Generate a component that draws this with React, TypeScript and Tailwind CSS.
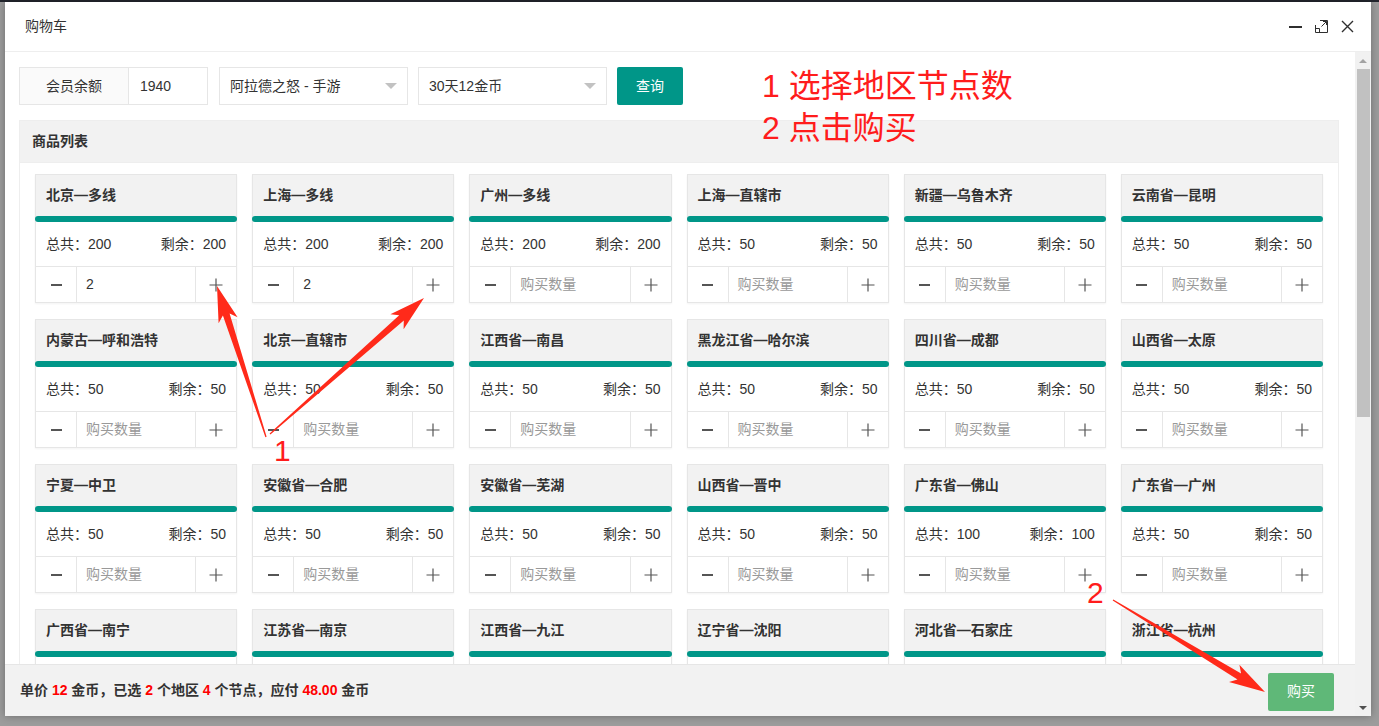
import React from "react";

type Node = { name: string; total: number; left: number; qty?: number };

const rows: Node[][] = [
  [
    { name: "北京—多线", total: 200, left: 200, qty: 2 },
    { name: "上海—多线", total: 200, left: 200, qty: 2 },
    { name: "广州—多线", total: 200, left: 200 },
    { name: "上海—直辖市", total: 50, left: 50 },
    { name: "新疆—乌鲁木齐", total: 50, left: 50 },
    { name: "云南省—昆明", total: 50, left: 50 },
  ],
  [
    { name: "内蒙古—呼和浩特", total: 50, left: 50 },
    { name: "北京—直辖市", total: 50, left: 50 },
    { name: "江西省—南昌", total: 50, left: 50 },
    { name: "黑龙江省—哈尔滨", total: 50, left: 50 },
    { name: "四川省—成都", total: 50, left: 50 },
    { name: "山西省—太原", total: 50, left: 50 },
  ],
  [
    { name: "宁夏—中卫", total: 50, left: 50 },
    { name: "安徽省—合肥", total: 50, left: 50 },
    { name: "安徽省—芜湖", total: 50, left: 50 },
    { name: "山西省—晋中", total: 50, left: 50 },
    { name: "广东省—佛山", total: 100, left: 100 },
    { name: "广东省—广州", total: 50, left: 50 },
  ],
  [
    { name: "广西省—南宁", total: 50, left: 50 },
    { name: "江苏省—南京", total: 50, left: 50 },
    { name: "江西省—九江", total: 50, left: 50 },
    { name: "辽宁省—沈阳", total: 50, left: 50 },
    { name: "河北省—石家庄", total: 50, left: 50 },
    { name: "浙江省—杭州", total: 50, left: 50 },
  ],
];

const nodes = rows.flat();

// tapered red arrow, thin at the tail and widening toward the head
const arrowPoints = (x1: number, y1: number, x2: number, y2: number) => {
  const dx = x2 - x1;
  const dy = y2 - y1;
  const len = Math.hypot(dx, dy);
  const ux = dx / len;
  const uy = dy / len;
  const nx = -uy;
  const ny = ux;
  const head = 30;
  const bx = x2 - ux * head;
  const by = y2 - uy * head;
  const wx = x2 - ux * (head + 6);
  const wy = y2 - uy * (head + 6);
  const p = (x: number, y: number) => `${x.toFixed(1)},${y.toFixed(1)}`;
  return [
    p(x1 + nx * 0.6, y1 + ny * 0.6),
    p(bx + nx * 3.5, by + ny * 3.5),
    p(wx + nx * 10, wy + ny * 10),
    p(x2, y2),
    p(wx - nx * 10, wy - ny * 10),
    p(bx - nx * 3.5, by - ny * 3.5),
    p(x1 - nx * 0.6, y1 - ny * 0.6),
  ].join(" ");
};

const Caret = () => (
  <span className="w-0 h-0 border-x-[6px] border-x-transparent border-t-[6px] border-t-[#c2c2c2]" />
);

const NodeCard = ({ node }: { node: Node }) => (
  <div className="border border-[#e6e6e6] bg-white shadow-[0_1px_2px_rgba(0,0,0,0.05)]">
    <div className="h-[41px] bg-[#f2f2f2] px-[10px] flex items-center text-[14px] font-bold text-[#333]">
      {node.name}
    </div>
    <div className="h-[6px] mx-[-1px] rounded-full bg-[#009688]" />
    <div className="h-[44px] px-[10px] flex items-center justify-between text-[14px] text-[#333]">
      <span>总共：{node.total}</span>
      <span>剩余：{node.left}</span>
    </div>
    <div className="h-[36px] border-t border-[#e6e6e6] flex">
      <div className="w-[41px] border-r border-[#e6e6e6] flex items-center justify-center">
        <span className="w-[11px] h-[2px] bg-[#555]" />
      </div>
      <div className="flex-1 px-[9px] flex items-center text-[14px]">
        {node.qty ? (
          <span className="text-[#333]">{node.qty}</span>
        ) : (
          <span className="text-[#999]">购买数量</span>
        )}
      </div>
      <div className="w-[41px] border-l border-[#e6e6e6] flex items-center justify-center text-[#555]">
        <svg width="14" height="14" viewBox="0 0 14 14">
          <path d="M7 0.5V13.5M0.5 7H13.5" stroke="#555" strokeWidth="1.2" />
        </svg>
      </div>
    </div>
  </div>
);

export default function App() {
  return (
    <div
      className="relative w-[1379px] h-[726px] overflow-hidden bg-[#9c9c9c]"
      style={{ fontFamily: '"Liberation Sans", "Noto Sans CJK SC", sans-serif' }}
    >
      <div className="h-[2px] bg-[#23262e]" />
      <div className="pl-[5px]">
        <div className="w-[1366px] h-[714px] bg-white flex flex-col shadow-[0_0_8px_rgba(0,0,0,0.3)]">
          {/* title bar */}
          <div className="h-[50px] shrink-0 border-b border-[#eee] flex items-center justify-between pl-[20px] pr-[16px]">
            <span className="text-[14px] text-[#333]">购物车</span>
            <div className="flex items-center gap-[11px]">
              <svg width="15" height="15" viewBox="0 0 15 15">
                <path d="M1 8H14" stroke="#2f2f2f" strokeWidth="2" />
              </svg>
              <svg width="15" height="15" viewBox="0 0 15 15">
                <path d="M1.5 6V13.5H13.5V1.5H6" fill="none" stroke="#2f2f2f" strokeWidth="1" />
                <path d="M1.5 9.5H5.5V13.5" fill="none" stroke="#2f2f2f" strokeWidth="1" />
                <path d="M7.5 7.5L12.5 2.5M9 2.5H12.5V6" fill="none" stroke="#2f2f2f" strokeWidth="1" />
              </svg>
              <svg width="15" height="15" viewBox="0 0 15 15">
                <path d="M2 2L13 13M13 2L2 13" stroke="#2f2f2f" strokeWidth="1.4" />
              </svg>
            </div>
          </div>

          <div className="flex-1 flex min-h-0">
            <div className="flex-1 flex flex-col min-w-0">
              <div className="flex-1 min-h-0 overflow-hidden pt-[15px] pl-[14px] pr-[16px]">
                {/* query bar */}
                <div className="h-[38px] flex items-center text-[14px] text-[#333]">
                  <div className="h-full flex border border-[#e6e6e6]">
                    <div className="w-[109px] bg-[#fafafa] border-r border-[#e6e6e6] flex items-center justify-center">
                      会员余额
                    </div>
                    <div className="w-[78px] px-[11px] flex items-center">1940</div>
                  </div>
                  <div className="ml-[11px] w-[189px] h-full border border-[#e6e6e6] px-[10px] flex items-center justify-between">
                    <span>阿拉德之怒 - 手游</span>
                    <Caret />
                  </div>
                  <div className="ml-[10px] w-[189px] h-full border border-[#e6e6e6] px-[10px] flex items-center justify-between">
                    <span>30天12金币</span>
                    <Caret />
                  </div>
                  <button className="ml-[10px] w-[66px] h-full bg-[#009688] text-white rounded-[2px] text-[14px]">
                    查询
                  </button>
                </div>

                {/* node list */}
                <div className="mt-[15px] border border-[#eee]">
                  <div className="h-[42px] bg-[#f2f2f2] border-b border-[#eee] px-[12px] flex items-center text-[14px] font-bold text-[#333]">
                    商品列表
                  </div>
                  <div className="px-[15px] pt-[11px] pb-[16px] grid grid-cols-6 gap-x-[15px] gap-y-[16px]">
                    {nodes.map((n) => (
                      <NodeCard key={n.name} node={n} />
                    ))}
                  </div>
                </div>
              </div>

              {/* footer */}
              <div className="h-[52px] shrink-0 bg-[#f2f2f2] border-t border-[#e6e6e6] flex items-center justify-between pl-[15px] pr-[21px]">
                <div className="text-[14px] font-bold text-[#333]">
                  单价 <span className="text-[#ff0000]">12</span> 金币，已选{" "}
                  <span className="text-[#ff0000]">2</span> 个地区{" "}
                  <span className="text-[#ff0000]">4</span> 个节点，应付{" "}
                  <span className="text-[#ff0000]">48.00</span> 金币
                </div>
                <button className="w-[66px] h-[38px] mt-[2px] bg-[#5fb878] text-white text-[14px] rounded-[2px]">
                  购买
                </button>
              </div>
            </div>

            {/* scrollbar */}
            <div className="w-[16px] shrink-0 bg-[#f1f1f1] flex flex-col items-center">
              <div className="h-[17px] flex items-center justify-center">
                <span className="w-0 h-0 border-x-[4px] border-x-transparent border-b-[4px] border-b-[#a3a3a3]" />
              </div>
              <div className="w-[13px] h-[348px] bg-[#c1c1c1]" />
              <div className="flex-1" />
              <div className="h-[17px] flex items-center justify-center">
                <span className="w-0 h-0 border-x-[4px] border-x-transparent border-t-[4px] border-t-[#505050]" />
              </div>
            </div>
          </div>
        </div>
      </div>

      {/* instructions drawn over the dialog */}
      <div className="absolute left-[762px] top-[65px] text-[32px] leading-[42px] text-[#ff1c1c]">
        <div>1 选择地区节点数</div>
        <div>2 点击购买</div>
      </div>
      <svg className="absolute inset-0 pointer-events-none" width="1379" height="726">
        <polygon points={arrowPoints(266, 437, 217, 286)} fill="#ff2a1a" />
        <polygon points={arrowPoints(270, 434, 424, 298)} fill="#ff2a1a" />
        <polygon points={arrowPoints(1113, 600, 1265, 692)} fill="#ff2a1a" />
      </svg>
      <div className="absolute left-[274px] top-[434px] text-[30px] leading-[34px] text-[#ff1c1c]">1</div>
      <div className="absolute left-[1087px] top-[576px] text-[30px] leading-[34px] text-[#ff1c1c]">2</div>
    </div>
  );
}
